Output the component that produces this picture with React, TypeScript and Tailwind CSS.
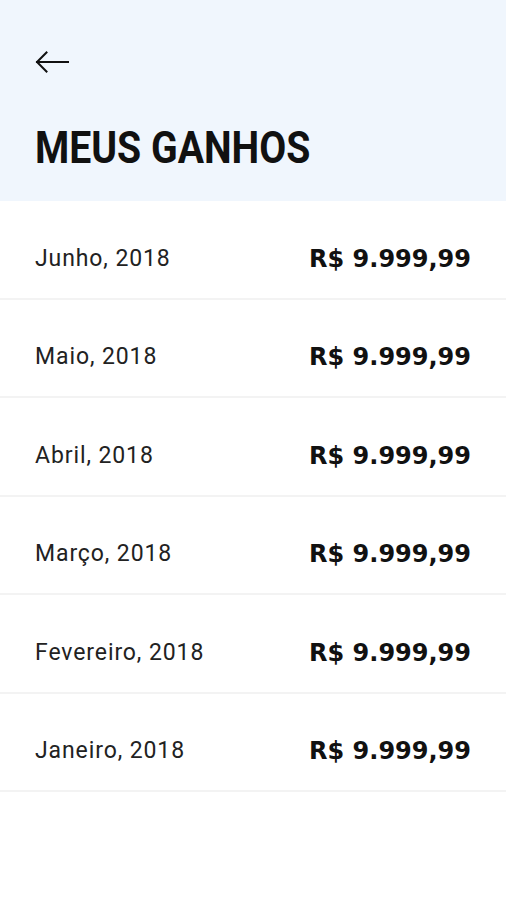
import React from "react";

const rows = [
  "Junho, 2018",
  "Maio, 2018",
  "Abril, 2018",
  "Março, 2018",
  "Fevereiro, 2018",
  "Janeiro, 2018",
];

export default function App() {
  return (
    <div className="w-[506px] min-h-[900px] bg-white font-['Roboto',sans-serif]">
      {/* Header */}
      <header className="h-[201px] bg-[#f0f6fd] px-[35px] pt-[50px]">
        <button className="block h-[24px] w-[34px] text-[#111]">
          <svg width="34" height="24" viewBox="0 0 34 24" fill="none">
            <path
              d="M33 12H2M11.5 2.5L2 12l9.5 9.5"
              stroke="currentColor"
              strokeWidth="2"
              strokeLinecap="square"
            />
          </svg>
        </button>
        <h1 className="mt-[48px] origin-left scale-x-[0.87] whitespace-nowrap text-[45px] leading-[52px] font-bold text-[#111]">
          MEUS GANHOS
        </h1>
      </header>

      {/* Earnings list */}
      <ul>
        {rows.map((month) => (
          <li
            key={month}
            className="flex h-[98.5px] items-center justify-between border-b-[2.5px] border-[#f3f3f3] pl-[35px] pr-[35px] pt-[19px]"
          >
            <span className="text-[23px] tracking-[0.9px] text-[#222]">{month}</span>
            <span className="font-['DejaVu_Sans',sans-serif] text-[24px] font-bold text-[#111]">
              R$ 9.999,99
            </span>
          </li>
        ))}
      </ul>
    </div>
  );
}
